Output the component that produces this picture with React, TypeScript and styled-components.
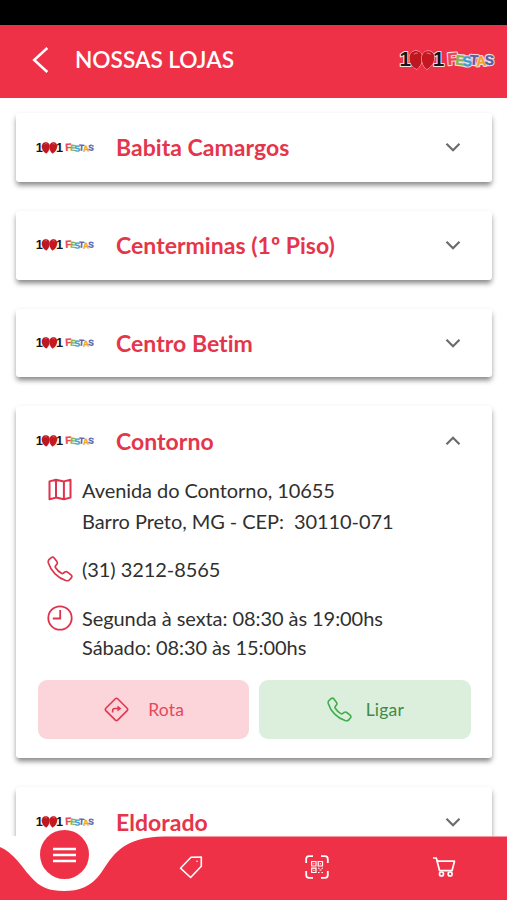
import React from "react";
import styled, { createGlobalStyle } from "styled-components";

const RED = "#ef3147";

const GlobalStyle = createGlobalStyle`
  * { box-sizing: border-box; }
  body {
    margin: 0;
    background: #fff;
    font-family: Lato, "Open Sans", sans-serif;
    font-variant-ligatures: none;
  }
  button { font: inherit; border: 0; padding: 0; background: none; color: inherit; }
`;

const Screen = styled.div`
  width: 507px;
  height: 900px;
  display: flex;
  flex-direction: column;
  overflow: hidden;
  background: #fff;
`;

const StatusBar = styled.div`
  flex: 0 0 25px;
  background: #000;
`;

const Header = styled.header`
  flex: 0 0 73px;
  display: flex;
  align-items: center;
  padding: 0 12px 3px 31px;
  background: ${RED};
  color: #fff;
`;

const BackButton = styled.button`
  display: flex;
  width: 18px;
  margin-right: 26px;
`;

const Title = styled.h1`
  flex: 1;
  margin: 0;
  font-size: 22.7px;
  font-weight: 600;
  letter-spacing: -0.05px;
  line-height: 30px;
`;

const StoreList = styled.main`
  flex: 1;
  min-height: 0;
  overflow: hidden;
  display: flex;
  flex-direction: column;
  gap: 29px;
  padding: 15px 15px 0 16px;
`;

const Card = styled.section`
  flex: none;
  background: #fff;
  border-radius: 3px;
  box-shadow: 0 4px 5px -1px rgba(0, 0, 0, 0.38), 0 3px 6px rgba(0, 0, 0, 0.16);
`;

const CardHeader = styled.div`
  display: flex;
  align-items: center;
  height: 68.8px;
  padding: 0 31px 0 20px;
`;

const StoreName = styled.h2`
  flex: 1;
  margin: 0 0 0 21.5px;
  color: #e5354b;
  font-size: 23px;
  font-weight: 700;
  letter-spacing: 0.03px;
  line-height: 30px;
`;

const Details = styled.div`
  padding: 0 21.5px 19.5px 22px;
`;

const InfoRow = styled.div<{ $gap: number; $line: number }>`
  display: flex;
  align-items: flex-start;
  gap: 8.5px;
  padding-left: 8.5px;
  margin-bottom: ${(p) => p.$gap}px;
  color: #303030;
  font-size: 20px;
  line-height: ${(p) => p.$line}px;
  letter-spacing: -0.07px;
  white-space: pre;
`;

const InfoIcon = styled.span<{ $drop?: number }>`
  display: flex;
  flex: 0 0 27px;
  padding-top: ${(p) => p.$drop ?? 0}px;
  color: #df334b;
`;

const Actions = styled.div`
  display: grid;
  grid-template-columns: 1fr 1fr;
  gap: 10px;
`;

const ActionButton = styled.button<{ $tone: "route" | "call" }>`
  display: flex;
  align-items: center;
  justify-content: center;
  gap: ${(p) => (p.$tone === "route" ? 19 : 14)}px;
  height: 58.5px;
  padding-left: 1px;
  border-radius: 9px;
  background: ${(p) => (p.$tone === "route" ? "#fbd5da" : "#dbefdc")};
  color: ${(p) => (p.$tone === "route" ? "#e5485b" : "#3f8a48")};
  font-size: 17.5px;
  letter-spacing: 0.2px;

  svg { color: ${(p) => (p.$tone === "route" ? "#df3850" : "#43ad50")}; }
`;

const TabBar = styled.nav`
  position: relative;
  flex: 0 0 64px;
  height: 64px;
  min-height: 0;
  display: grid;
  grid-template-columns: 127px 127px 126px 127px;
  grid-template-rows: 64px;
  justify-items: center;
  align-items: center;
  background: #fff;
  color: #fff;
`;

const TabShape = styled.svg`
  position: absolute;
  inset: 0;
`;

const Tab = styled.button`
  position: relative;
  display: flex;
  margin-bottom: 2px;
`;

const MenuButton = styled.button`
  position: relative;
  display: flex;
  align-items: center;
  justify-content: center;
  align-self: start;
  width: 49px;
  height: 49px;
  margin-top: -6px;
  margin-left: 1px;
  border-radius: 50%;
  background: ${RED};
`;

const LogoSvg = styled.svg`
  overflow: visible;
`;

const letters: [string, number, number, number, string][] = [
  ["F", 48, 16, -4, "#e9485b"],
  ["E", 56, 16, 6, "#83b549"],
  ["S", 63.3, 17.3, -5, "#3c9dd0"],
  ["T", 70.6, 16, 4, "#6656a5"],
  ["A", 77, 17.2, -4, "#f1a41f"],
  ["S", 85.6, 16, 4, "#5060a8"],
];

function LogoLetters({ halo }: { halo?: boolean }) {
  return (
    <>
      {letters.map(([ch, x, y, turn, fill], i) => (
        <text
          key={i}
          x={x}
          y={y}
          fontSize={i === 0 ? 17 : 14}
          fill={halo ? "#f3dce2" : fill}
          stroke={halo ? "#f3dce2" : fill}
          strokeWidth={halo ? 2.6 : 0.4}
          transform={`rotate(${turn} ${x + 4} ${y - 4})`}
          aria-hidden={halo}
        >
          {ch}
        </text>
      ))}
    </>
  );
}

function Logo({ width, outlined }: { width: number; outlined?: boolean }) {
  return (
    <LogoSvg width={width} height={(width * 22) / 96} viewBox="0 0 96 22" role="img" aria-label="1001 Festas">
      <g
        fontFamily="Liberation Sans, sans-serif"
        fontWeight="700"
        strokeLinejoin="round"
        style={{ paintOrder: "stroke" }}
      >
        <g fontSize="21" fill="#171717" stroke={outlined ? "#f5e8e6" : "none"} strokeWidth="2">
          <text x="-.6" y="17.5">1</text>
          <text x="33" y="17.5">1</text>
        </g>
        <g stroke={outlined ? "#f5dcdb" : "#e56c6c"} strokeWidth={outlined ? 1 : 0.5}>
          <path d="M17 20.5C12 18 9.5 13.5 9.5 9C9.5 4.5 12.5 2 16 2C20.5 2 23 5.5 22.5 10C22 14.5 20 18 17 20.5Z" fill="#bd1721" />
          <path d="M27 20.5C24 18 22.2 14.5 22 10C21.7 5.5 24.5 2 28.7 2C32.5 2 35 5 34.7 9C34.4 13.5 32 18 27 20.5Z" fill="#c51722" />
        </g>
        <path d="M14 5.5q1.5-2 4-1M27 4.5q2-1 4 1" stroke="#ea6565" strokeWidth="1.2" fill="none" />
        {outlined && <LogoLetters halo />}
        <LogoLetters />
      </g>
    </LogoSvg>
  );
}

function Chevron({ up }: { up?: boolean }) {
  return (
    <svg width="16" height="10" viewBox="0 0 16 10" fill="none" stroke="#6c6c6c" strokeWidth="2.2">
      <path d={up ? "M1.5 8.3L8 1.8L14.5 8.3" : "M1.5 1.8L8 8.3L14.5 1.8"} />
    </svg>
  );
}

function PhoneIcon({ size }: { size: number }) {
  return (
    <svg width={size} height={size} viewBox="0 0 26 26" fill="none" stroke="currentColor" strokeWidth="1.7" strokeLinejoin="round">
      <path d="M2.2 3.4L4.3 1.6Q5.9.6 7.2 2L9.9 5.6Q10.8 7 9.8 8.3L8.5 10Q8 10.8 8.6 11.7Q10.8 15.2 14.4 17.3Q15.3 17.8 16.1 17.3L17.9 16Q19.2 15.2 20.5 16.1L24 18.8Q25.4 20.1 24.5 21.6L22.6 23.8Q21.4 25.2 18.8 24.5C10.8 22 3.9 15.2 1.4 7Q.8 4.7 2.2 3.4Z" />
    </svg>
  );
}

function MapIcon() {
  return (
    <svg width="26" height="24" viewBox="0 0 26 24" fill="none" stroke="currentColor" strokeWidth="2" strokeLinejoin="round">
      <path d="M2.5 3.4L9 1.7L16.9 3.4L23.5 1.7V19.6L16.9 21.3L9 19.6L2.5 21.3ZM9 1.7V19.6M16.9 3.4V21.3" />
    </svg>
  );
}

function ClockIcon() {
  return (
    <svg width="26" height="26" viewBox="0 0 26 26" fill="none" stroke="currentColor" strokeWidth="1.8">
      <circle cx="13" cy="13" r="11.7" />
      <path d="M13.2 5V13.5H5.8" />
    </svg>
  );
}

function RouteIcon() {
  return (
    <svg width="25" height="25" viewBox="0 0 26 26" fill="none" stroke="currentColor" strokeWidth="1.7" strokeLinejoin="round">
      <path d="M11.8 1.8Q13 .8 14.2 1.8L24.1 11.7Q25.2 13 24.1 14.2L14.2 24.1Q13 25.2 11.8 24.1L1.9 14.2Q.8 13 1.9 11.7Z" />
      <path d="M9 16.2V14Q9 12 11.5 12H15" />
      <path d="M14 8.8L18 12L14 15.2Z" fill="currentColor" stroke="none" />
    </svg>
  );
}

function StoreHeader({ name, open }: { name: string; open?: boolean }) {
  return (
    <CardHeader>
      <Logo width={58.5} />
      <StoreName>{name}</StoreName>
      <Chevron up={open} />
    </CardHeader>
  );
}

export default function App() {
  return (
    <>
      <GlobalStyle />
      <Screen>
        <StatusBar />
        <Header>
          <BackButton aria-label="Voltar">
            <svg width="18" height="28" viewBox="0 0 18 28" fill="none" stroke="#fff" strokeWidth="2.5">
              <path d="M16.3 2L3.2 14L16.3 26" />
            </svg>
          </BackButton>
          <Title>NOSSAS LOJAS</Title>
          <Logo width={95} outlined />
        </Header>

        <StoreList>
          <Card><StoreHeader name="Babita Camargos" /></Card>
          <Card><StoreHeader name="Centerminas (1º Piso)" /></Card>
          <Card><StoreHeader name="Centro Betim" /></Card>
          <Card>
            <StoreHeader name="Contorno" open />
            <Details>
              <InfoRow $gap={18} $line={31}>
                <InfoIcon $drop={3}><MapIcon /></InfoIcon>
                <span>{"Avenida do Contorno, 10655\nBarro Preto, MG - CEP:  30110-071"}</span>
              </InfoRow>
              <InfoRow $gap={20} $line={29}>
                <InfoIcon $drop={1}><PhoneIcon size={26} /></InfoIcon>
                <span>(31) 3212-8565</span>
              </InfoRow>
              <InfoRow $gap={19} $line={28.5}>
                <InfoIcon $drop={0.5}><ClockIcon /></InfoIcon>
                <span>{"Segunda à sexta: 08:30 às 19:00hs\nSábado: 08:30 às 15:00hs"}</span>
              </InfoRow>
              <Actions>
                <ActionButton $tone="route"><RouteIcon />Rota</ActionButton>
                <ActionButton $tone="call"><PhoneIcon size={25} />Ligar</ActionButton>
              </Actions>
            </Details>
          </Card>
          <Card><StoreHeader name="Eldorado" /></Card>
        </StoreList>

        <TabBar>
          <TabShape width="507" height="64" viewBox="0 0 507 64">
            <path d="M0 11C14 17 21 30 30 40C40 52 50 55 64 55C79 55 91 51 101 37C113 20 121 1 165 .6H507V64H0Z" fill={RED} />
          </TabShape>
          <MenuButton aria-label="Menu">
            <svg width="23" height="16" viewBox="0 0 23 16" stroke="#fff" strokeWidth="2.4">
              <path d="M0 2H23M0 8H23M0 14H23" />
            </svg>
          </MenuButton>
          <Tab aria-label="Ofertas">
            <svg width="24" height="24" viewBox="0 0 24 24" fill="none" stroke="#fff" strokeWidth="1.6" strokeLinejoin="round">
              <path d="M1.5 13.2L12 2.3L22.3 2V11.2L11.6 22.5Z" />
              <circle cx="18" cy="6.2" r=".8" fill="#fff" stroke="none" />
            </svg>
          </Tab>
          <Tab aria-label="Código QR">
            <svg width="24" height="24" viewBox="0 0 24 24" fill="none" stroke="#fff">
              <path d="M1.2 8V4Q1.2 1.2 4 1.2H8M16 1.2H20Q22.8 1.2 22.8 4V8M22.8 16V20Q22.8 22.8 20 22.8H16M8 22.8H4Q1.2 22.8 1.2 20V16" strokeWidth="1.8" />
              <path d="M6.7 6.5H11V11H6.7ZM13.2 6.5H17.5V11H13.2ZM6.7 13.2H11V17.5H6.7Z" strokeWidth="1.2" />
              <path d="M8.3 8.8H9.5M14.8 8.8H16M8.3 15.3H9.5M13 13.3H14.5M16.5 13.3H18M14.5 15H16.5M13 17.5H14.5M16.5 17.5H18" strokeWidth="1.1" />
            </svg>
          </Tab>
          <Tab aria-label="Carrinho">
            <svg width="24" height="22" viewBox="0 0 24 22" fill="none" stroke="#fff" strokeWidth="1.7" strokeLinejoin="round">
              <path d="M1 2H4.3L7.6 14.7H20L22.5 5.2H5.2" />
              <circle cx="9.5" cy="18" r="2" />
              <circle cx="18.1" cy="18" r="2" />
            </svg>
          </Tab>
        </TabBar>
      </Screen>
    </>
  );
}
